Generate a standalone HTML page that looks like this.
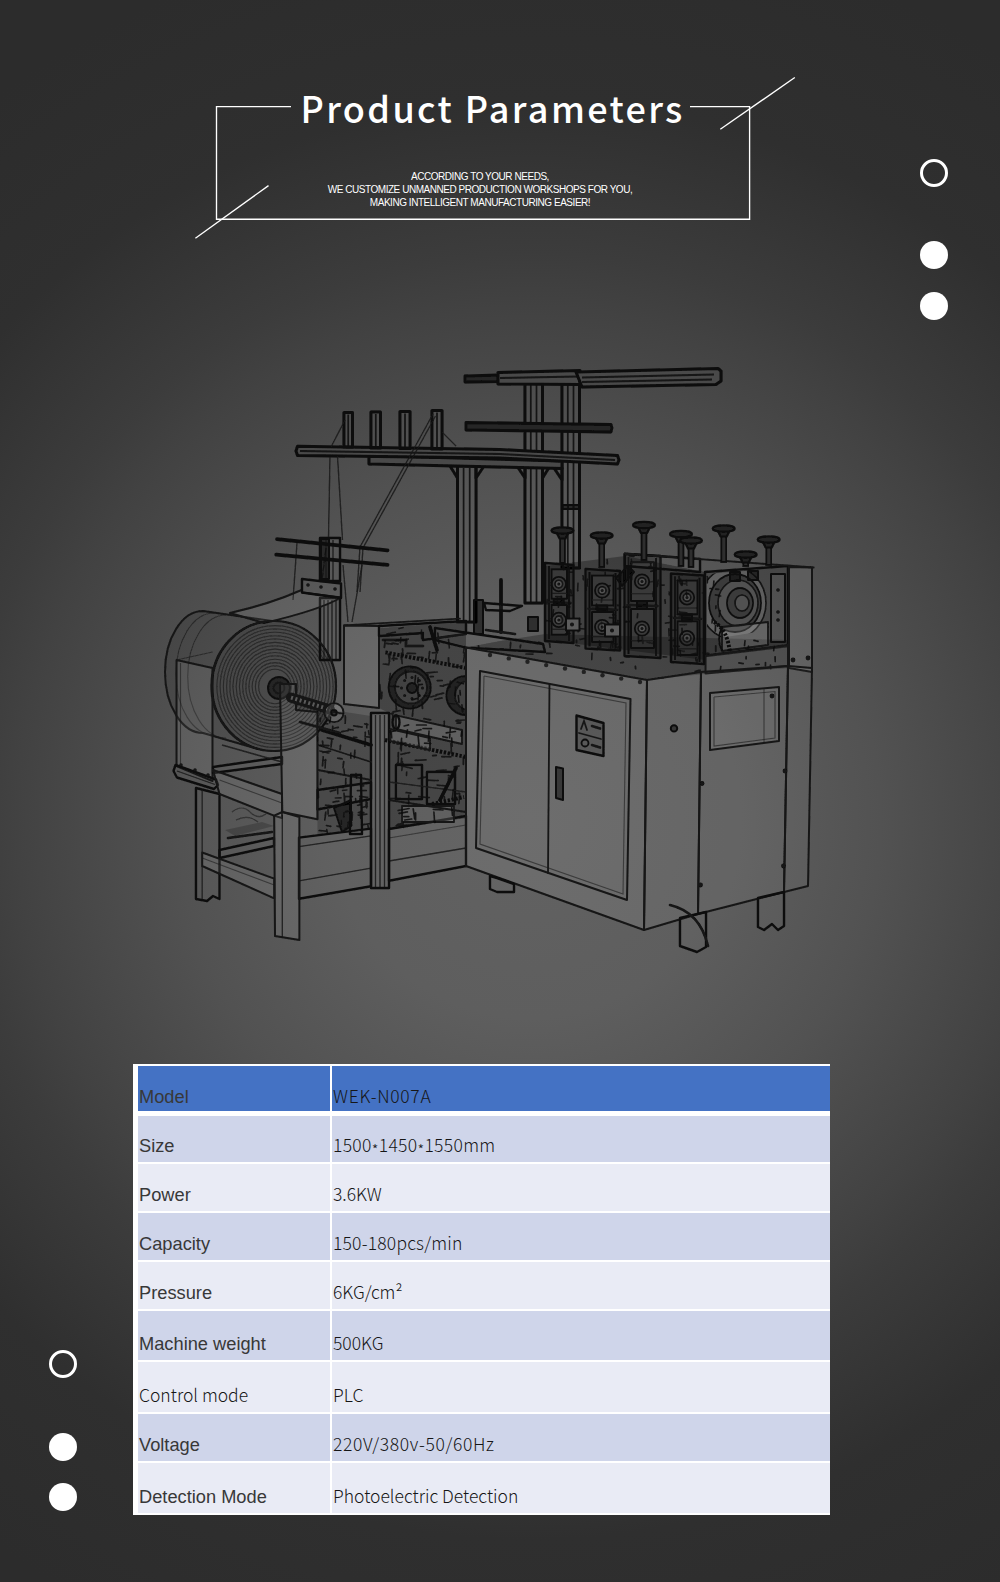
<!DOCTYPE html>
<html lang="en">
<head>
<meta charset="utf-8">
<title>Product Parameters</title>
<style>
html,body{margin:0;padding:0;}
body{width:1000px;height:1582px;overflow:hidden;background:#2c2c2c;font-family:"Liberation Sans",sans-serif;}
#page{position:relative;width:1000px;height:1582px;overflow:hidden;
  background:radial-gradient(circle 900px at 530px 820px,#626262 0%,#5e5e5e 22%,#525252 39%,#424242 57%,#3c3c3c 63%,#2f2f2f 80%,#2c2c2c 100%);}
.abs{position:absolute;}
/* header frame */
.frame-line{position:absolute;background:#fff;}
#title{position:absolute;left:300.5px;top:79px;width:400px;height:56px;line-height:56px;color:#fff;
  font-family:"Noto Sans CJK SC","Liberation Sans",sans-serif;font-size:36px;letter-spacing:2.35px;white-space:nowrap;font-weight:500;}
#sub{position:absolute;left:230px;top:169.6px;width:500px;text-align:center;color:#fff;font-size:10px;letter-spacing:-0.46px;line-height:13.4px;
  font-family:"Liberation Sans",sans-serif;white-space:nowrap;}
.dot{position:absolute;width:28px;height:28px;border-radius:50%;background:#fff;box-sizing:border-box;}
.ring{background:transparent;border:3px solid #fff;}
/* table */
#tbl{position:absolute;left:133px;top:1064px;width:697px;height:451px;background:#fff;}
.c{position:absolute;}
.c1{left:5px;width:192px;}
.c2{left:199px;width:498px;}
.hd{background:#4472c4;}
.ra{background:#cfd5ea;}
.rb{background:#e9ebf5;}
.t{position:absolute;white-space:nowrap;line-height:20px;height:20px;}
.l{left:139px;font-family:"Liberation Sans",sans-serif;font-size:18.25px;color:#383838;}
.r{left:333px;font-family:"Noto Sans CJK SC","Liberation Sans",sans-serif;font-weight:300;font-size:17.5px;color:#161616;}
.ast{position:relative;top:3.5px;font-size:15px;}
</style>
</head>
<body>
<div id="page">

<!-- header frame -->
<svg class="abs" style="left:0;top:0" width="1000" height="300" viewBox="0 0 1000 300">
  <path d="M291 106.6 H216.5 V219.2 H749.6 V106.6 H690" fill="none" stroke="#fff" stroke-width="1.35"/>
  <line x1="794.8" y1="77.5" x2="720.3" y2="129.3" stroke="#fff" stroke-width="1.35"/>
  <line x1="268.5" y1="185.6" x2="195.4" y2="238.2" stroke="#fff" stroke-width="1.35"/>
</svg>
<div id="title">Product Parameters</div>
<div id="sub">ACCORDING TO YOUR NEEDS,<br>WE CUSTOMIZE UNMANNED PRODUCTION WORKSHOPS FOR YOU,<br>MAKING INTELLIGENT MANUFACTURING EASIER!</div>

<!-- dots -->
<div class="dot ring" style="left:920px;top:159px;"></div>
<div class="dot" style="left:920px;top:241px;"></div>
<div class="dot" style="left:920px;top:292px;"></div>
<div class="dot ring" style="left:49px;top:1350px;"></div>
<div class="dot" style="left:49px;top:1433px;"></div>
<div class="dot" style="left:49px;top:1483px;"></div>

<!-- MACHINE -->
<svg id="machine" class="abs" style="left:0;top:340px" width="1000" height="660" viewBox="0 340 1000 660">
<style>
#machine .p{fill:rgba(255,255,255,.075);stroke:#151515;stroke-width:2;stroke-linejoin:round}
#machine .pc{fill:url(#cabg);stroke:#151515;stroke-width:2;stroke-linejoin:round}
#machine .pc2{fill:rgba(255,255,255,.02);stroke:#151515;stroke-width:2;stroke-linejoin:round}
#machine .pan{fill:rgba(0,0,0,.18);stroke:#101010;stroke-width:2.4;stroke-linejoin:round}
#machine .pl{fill:rgba(255,255,255,.14);stroke:#141414;stroke-width:1.8;stroke-linejoin:round}
#machine .pl2{fill:rgba(255,255,255,.12);stroke:#121212;stroke-width:1.6;stroke-linejoin:round}
#machine .door{fill:rgba(255,255,255,.005);stroke:#151515;stroke-width:2;stroke-linejoin:round}
#machine .win{fill:rgba(255,255,255,.05);stroke:#151515;stroke-width:2;stroke-linejoin:round}
#machine .m{fill:rgba(255,255,255,.02);stroke:#101010;stroke-width:2.4;stroke-linejoin:round}
#machine .rm{fill:rgba(255,255,255,.02);stroke:#0c0c0c;stroke-width:3;stroke-linejoin:round}
#machine .rmO{fill:#484848;stroke:#0c0c0c;stroke-width:3;stroke-linejoin:round}
#machine .rdO{fill:#262626;stroke:#0c0c0c;stroke-width:2.8;stroke-linejoin:round}
#machine .rl{fill:none;stroke:#101010;stroke-width:1.8;opacity:.9}
#machine .mO{fill:#4c4c4c;stroke:#101010;stroke-width:2.5;stroke-linejoin:round}
#machine .dO{fill:#2c2c2c;stroke:#101010;stroke-width:2;stroke-linejoin:round}
#machine .d{fill:rgba(0,0,0,.5);stroke:#101010;stroke-width:2;stroke-linejoin:round}
#machine .dk{fill:rgba(0,0,0,.27);stroke:none}
#machine .dk3{fill:rgba(0,0,0,.3);stroke:none}
#machine .dk2{fill:rgba(0,0,0,.2);stroke:none}
#machine .blk{fill:rgba(255,255,255,.05);stroke:#0f0f0f;stroke-width:2;stroke-linejoin:round}
#machine .pl3{fill:#5c5c5c;stroke:#0f0f0f;stroke-width:2;stroke-linejoin:round}
#machine .stm{fill:#2e2e2e;stroke:#0c0c0c;stroke-width:1.8}
#machine .mod2{fill:rgba(0,0,0,.14);stroke:#0f0f0f;stroke-width:2.4;stroke-linejoin:round}
#machine .dfill{fill:#3a3a3a;stroke:#101010;stroke-width:1.8}
#machine .mod{fill:rgba(0,0,0,.22);stroke:#0f0f0f;stroke-width:2.4;stroke-linejoin:round}
#machine .lnm{fill:none;stroke:#0f0f0f;stroke-width:1.8}
#machine .cl{fill:none;stroke:#0e0e0e;stroke-width:1.7;stroke-linecap:round;opacity:.85}
#machine .body{fill:rgba(0,0,0,.08);stroke:#151515;stroke-width:2}
#machine .face{fill:rgba(0,0,0,.15);stroke:#131313;stroke-width:2.2}
#machine .ring{fill:none;stroke:#141414;stroke-width:1.1;opacity:.6}
#machine .ln{fill:none;stroke:#151515;stroke-width:1.8;stroke-linecap:round}
#machine .l2{fill:none;stroke:#161616;stroke-width:1.3;opacity:.85}
#machine .l3{fill:none;stroke:#1a1a1a;stroke-width:1.1;opacity:.6}
#machine .w{fill:none;stroke:#161616;stroke-width:1.3;opacity:.85}
#machine .rod{fill:none;stroke:#111;stroke-width:3.8;stroke-linecap:round}
#machine .rod2{fill:none;stroke:#131313;stroke-width:2.6;stroke-linecap:round}
#machine .chain{fill:none;stroke:#0f0f0f;stroke-width:4;stroke-dasharray:2.4 1.6}
#machine .shaft{fill:none;stroke:#141414;stroke-width:10;stroke-linecap:round}
#machine .shaftd{fill:none;stroke:#5a5a5a;stroke-width:4;stroke-dasharray:2 2.5}
#machine .stem{fill:none;stroke:#101010;stroke-width:4.4}
#machine .cap{fill:#242424;stroke:#0b0b0b;stroke-width:2.2;stroke-linejoin:round}
#machine .dot{fill:#121212;stroke:none}
</style>
<defs><linearGradient id="cabg" gradientUnits="userSpaceOnUse" x1="0" y1="650" x2="0" y2="930"><stop offset="0" stop-color="#fff" stop-opacity=".13"/><stop offset="1" stop-color="#fff" stop-opacity=".02"/></linearGradient><filter id="soft" x="-2%" y="-2%" width="104%" height="104%"><feGaussianBlur stdDeviation="0.4"/></filter></defs>
<g filter="url(#soft)">
<g id="rack">
<rect class="rm" x="457.5" y="466.0" width="18.5" height="156.0"/>
<polyline class="rl" points="463.6,468.0 463.6,622.0"/>
<polyline class="rl" points="469.7,468.0 469.7,622.0"/>
<rect class="rm" x="525.0" y="383.0" width="17.5" height="220.0"/>
<polyline class="rl" points="530.8,385.0 530.8,603.0"/>
<polyline class="rl" points="536.5,385.0 536.5,603.0"/>
<rect class="rm" x="562.0" y="383.0" width="17.5" height="185.0"/>
<polyline class="rl" points="567.8,385.0 567.8,568.0"/>
<polyline class="rl" points="573.5,385.0 573.5,568.0"/>
<rect class="d" x="562.0" y="505.0" width="17.5" height="4.0"/>
<polygon class="rm" points="450.0,466.0 457.5,466.0 457.5,478.0"/>
<polygon class="rm" points="476.0,466.0 484.0,466.0 476.0,478.0"/>
<polygon class="rm" points="517.0,466.0 525.0,466.0 525.0,478.0"/>
<polygon class="rm" points="542.5,466.0 550.0,466.0 542.5,478.0"/>
<polygon class="rm" points="554.0,468.0 562.0,468.0 562.0,480.0"/>
<polygon class="rdO" points="465.0,376.0 500.0,375.0 500.0,381.5 465.0,382.0"/>
<polygon class="rmO" points="498.0,372.5 580.0,370.5 580.0,384.5 498.0,384.0"/>
<polyline class="rl" points="500.0,378.0 578.0,376.5"/>
<polygon class="rmO" points="576.0,372.0 718.0,368.5 721.0,371.0 721.0,381.0 716.0,384.5 582.0,387.0"/>
<polyline class="rl" points="582.0,377.5 714.0,374.5"/>
<polyline class="rl" points="582.0,382.0 712.0,379.5"/>
<polygon class="rdO" points="466.0,422.5 611.0,424.5 612.0,428.0 611.0,432.0 466.0,430.0"/>
<polygon class="rmO" points="369.0,455.5 562.0,461.0 562.0,468.5 369.0,464.0"/>
<polygon class="rmO" points="297.5,446.3 500.0,449.5 617.5,455.5 619.0,460.0 617.5,464.0 500.0,458.0 297.5,455.5 296.0,451.0"/>
<polyline class="rl" points="300.0,451.0 500.0,454.0 615.0,460.0"/>
<rect class="rm" x="344.0" y="412.5" width="8.5" height="34.5"/>
<polyline class="rl" points="348.2,414.5 348.2,447.0"/>
<rect class="rm" x="371.0" y="412.0" width="9.5" height="36.0"/>
<polyline class="rl" points="375.8,414.0 375.8,448.0"/>
<rect class="rm" x="400.0" y="411.5" width="10.0" height="37.0"/>
<polyline class="rl" points="405.0,413.5 405.0,448.5"/>
<rect class="rm" x="432.0" y="410.5" width="10.0" height="38.5"/>
<polyline class="rl" points="437.0,412.5 437.0,449.0"/>
<polyline class="w" points="433.0,414.0 360.0,547.0 357.0,592.0"/>
<polyline class="w" points="435.5,416.0 363.0,548.0 360.0,592.0"/>
<polyline class="w" points="330.0,456.0 328.5,538.0"/>
<polyline class="w" points="337.5,456.0 342.5,540.0"/>
<polyline class="w" points="345.0,420.0 331.0,447.0"/>
<polyline class="w" points="442.0,432.0 456.0,446.0"/>
<polyline class="w" points="326.0,548.0 322.0,580.0"/>
<polyline class="w" points="297.0,543.0 293.0,600.0"/>
<polyline class="w" points="343.0,565.0 348.0,622.0"/>
<polyline class="w" points="362.0,565.0 352.0,622.0"/>
</g>
<g id="arms">
<rect class="m" x="320.0" y="538.0" width="20.0" height="43.0"/>
<polyline class="l2" points="326.0,540.0 326.0,580.0"/>
<polyline class="l2" points="333.0,540.0 333.0,580.0"/>
<rect class="m" x="320.0" y="598.0" width="20.0" height="62.0"/>
<polyline class="l2" points="324.0,600.0 324.0,659.0"/>
<polyline class="l2" points="328.0,600.0 328.0,659.0"/>
<polyline class="l2" points="332.0,600.0 332.0,659.0"/>
<polyline class="l2" points="336.0,600.0 336.0,659.0"/>
<rect class="d" x="321.0" y="539.0" width="8.0" height="40.0"/>
<polyline class="rod" points="277.0,539.2 387.5,550.4"/>
<polyline class="rod" points="276.2,554.7 387.5,564.9"/>
</g>
<g id="drum">
<path class="body" d="M 203 611 L 272 621 A 62 65 0 0 0 258 749 L 203 733 A 38 61 0 0 1 203 611 Z"/>
<path class="l3" d="M 214 613 A 38 61 0 0 0 214 735"/>
<path class="l3" d="M 226 615 A 38 61 0 0 0 226 738"/>
<polygon class="p" points="176.5,660.0 212.5,668.0 212.5,781.0 176.5,766.0"/>
<polyline class="l3" points="180.5,663.0 180.5,766.0"/>
<polyline class="l3" points="176.5,660.0 212.5,652.0"/>
<path class="p" d="M 230 613 Q 270 604 301.6 590 L 302 592.5 L 341 597.5 Q 320 610 264 623 Z"/>
<ellipse class="face" cx="274.0" cy="686.0" rx="62.0" ry="65.0"/>
<ellipse class="ring" cx="275.0" cy="686.5" rx="58.0" ry="60.9"/>
<ellipse class="ring" cx="275.0" cy="686.5" rx="54.8" ry="57.5"/>
<ellipse class="ring" cx="275.0" cy="686.5" rx="51.6" ry="54.2"/>
<ellipse class="ring" cx="275.0" cy="686.5" rx="48.4" ry="50.8"/>
<ellipse class="ring" cx="275.0" cy="686.5" rx="45.2" ry="47.5"/>
<ellipse class="ring" cx="275.0" cy="686.5" rx="42.0" ry="44.1"/>
<ellipse class="ring" cx="275.0" cy="686.5" rx="38.8" ry="40.7"/>
<ellipse class="ring" cx="275.0" cy="686.5" rx="35.6" ry="37.4"/>
<ellipse class="ring" cx="275.0" cy="686.5" rx="32.4" ry="34.0"/>
<ellipse class="ring" cx="275.0" cy="686.5" rx="29.2" ry="30.7"/>
<ellipse class="ring" cx="275.0" cy="686.5" rx="26.0" ry="27.3"/>
<ellipse class="ring" cx="275.0" cy="686.5" rx="22.8" ry="23.9"/>
<ellipse class="ring" cx="275.0" cy="686.5" rx="19.6" ry="20.6"/>
<ellipse class="ring" cx="275.0" cy="686.5" rx="16.4" ry="17.2"/>
<ellipse class="d" cx="279.0" cy="688.0" rx="11.0" ry="11.0"/>
<ellipse class="ln" cx="279.0" cy="688.0" rx="5.5" ry="5.5"/>
<polygon class="m" points="302.0,579.0 341.0,583.5 341.0,598.0 302.0,592.5"/>
<ellipse class="dot" cx="308.0" cy="585.0" rx="1.8" ry="1.8"/>
<ellipse class="dot" cx="321.0" cy="587.0" rx="1.8" ry="1.8"/>
<ellipse class="dot" cx="335.0" cy="589.0" rx="1.8" ry="1.8"/>
<polygon class="m" points="175.5,765.0 216.0,779.5 218.0,785.0 214.0,789.0 177.0,777.5 173.5,771.0"/>
<polyline class="l2" points="177.0,771.0 215.0,784.5"/>
<ellipse class="dot" cx="181.0" cy="765.0" rx="1.8" ry="1.8"/>
<ellipse class="dot" cx="195.0" cy="770.0" rx="1.8" ry="1.8"/>
<ellipse class="dot" cx="208.0" cy="775.0" rx="1.8" ry="1.8"/>
</g>
<g id="frame">
<polygon class="m" points="213.0,767.0 282.0,757.0 282.0,764.0 213.0,773.0"/>
<polyline class="l2" points="222.0,745.0 282.0,762.0"/>
<polygon class="m" points="219.5,850.0 274.0,838.0 274.0,846.0 219.5,858.0"/>
<polygon class="dk2" points="225.0,830.0 262.0,822.0 274.0,826.0 235.0,836.0"/>
<path class="l3" d="M232 812q10 -8 18 0t16 2M236 820q12 -6 22 2"/>
<polyline class="rod2" points="228.0,838.0 272.0,832.0"/>
<polygon class="m" points="196.0,788.0 219.5,794.0 219.5,899.0 213.0,896.0 207.0,901.0 196.0,899.0"/>
<polyline class="l2" points="202.2,790.0 202.2,899.0"/>
<polygon class="p" points="213.0,770.0 282.0,794.0 282.0,818.0 274.0,815.6 219.5,794.0"/>
<polyline class="l3" points="219.5,780.0 282.0,803.0"/>
<polygon class="p" points="202.2,852.5 274.2,878.6 274.2,898.4 202.2,866.0"/>
<polyline class="l3" points="202.2,858.0 274.2,885.0"/>
<polygon class="m" points="299.0,837.6 371.0,828.6 371.0,886.2 299.0,898.8"/>
<polyline class="l2" points="299.0,846.6 371.0,835.8"/>
<polyline class="l2" points="299.0,880.8 371.0,868.2"/>
<polygon class="m" points="389.0,829.0 466.0,816.0 466.0,866.0 389.0,880.8"/>
<polyline class="l2" points="389.0,861.0 466.0,848.0"/>
<polyline class="l3" points="389.0,838.0 466.0,825.0"/>
<polygon class="m" points="317.4,790.0 371.0,782.5 371.0,799.0 317.4,809.5"/>
<polygon class="p" points="280.0,684.0 296.0,684.0 296.0,710.0 317.4,712.0 317.4,819.2 282.3,812.0"/>
<polygon class="p" points="274.2,815.6 282.3,812.0 299.4,817.0 299.4,940.0 275.0,936.0"/>
<polyline class="l2" points="282.3,815.0 282.3,938.0"/>
<rect class="m" x="371.0" y="713.0" width="18.0" height="175.0"/>
<polyline class="l2" points="375.5,715.0 375.5,887.0"/>
<polyline class="l2" points="380.0,715.0 380.0,887.0"/>
<polyline class="l2" points="384.5,715.0 384.5,887.0"/>
</g>
<g id="mid">
<polygon class="dk" points="379.0,628.0 466.0,622.0 466.0,818.0 389.0,830.0 389.0,713.0 379.0,708.0"/>
<polygon class="dk2" points="300.0,705.0 371.0,716.0 371.0,829.0 317.4,836.0 317.4,712.0"/>
<polygon class="p" points="344.0,625.4 379.0,626.0 379.0,708.0 344.0,704.0"/>
<polyline class="ln" points="344.0,625.4 460.0,618.7"/>
<polygon class="m" points="379.0,626.0 466.0,621.0 466.0,634.0 423.0,640.0 423.0,633.0 379.0,636.0"/>
<polyline class="rod2" points="383.0,640.0 406.0,640.0 406.0,646.0 423.0,646.0"/>
<polyline class="chain" points="385.4,652.4 466.0,668.0"/>
<polyline class="chain" points="385.0,740.0 466.0,757.0"/>
<ellipse class="d" cx="409.7" cy="687.5" rx="21.0" ry="21.0"/>
<ellipse class="pl" cx="411.0" cy="687.5" rx="16.0" ry="16.0"/>
<ellipse class="d" cx="412.0" cy="688.0" rx="5.0" ry="5.0"/>
<ellipse class="dot" cx="422.5" cy="688.0" rx="1.5" ry="1.5"/>
<ellipse class="dot" cx="419.4" cy="695.4" rx="1.5" ry="1.5"/>
<ellipse class="dot" cx="412.0" cy="698.5" rx="1.5" ry="1.5"/>
<ellipse class="dot" cx="404.6" cy="695.4" rx="1.5" ry="1.5"/>
<ellipse class="dot" cx="401.5" cy="688.0" rx="1.5" ry="1.5"/>
<ellipse class="dot" cx="404.6" cy="680.6" rx="1.5" ry="1.5"/>
<ellipse class="dot" cx="412.0" cy="677.5" rx="1.5" ry="1.5"/>
<ellipse class="dot" cx="419.4" cy="680.6" rx="1.5" ry="1.5"/>
<path class="d" d="M 466 676 A 19.5 19.5 0 0 0 466 715 Z"/>
<path class="pl" d="M 466 681 A 15 15 0 0 0 466 710 Z"/>
<polygon class="pl" points="396.0,715.4 462.0,730.0 462.0,744.0 396.0,729.0"/>
<ellipse class="m" cx="396.0" cy="722.2" rx="3.5" ry="7.0"/>
<polygon class="pl" points="390.0,729.0 430.0,738.0 430.0,750.0 390.0,741.0"/>
<rect class="m" x="396.0" y="765.0" width="26.0" height="34.0"/>
<rect class="m" x="427.0" y="772.0" width="28.0" height="32.0"/>
<rect class="pl" x="402.0" y="806.0" width="52.0" height="16.0"/>
<polyline class="ln" points="389.0,800.0 466.0,812.0"/>
<polyline class="l2" points="389.0,782.0 466.0,792.0"/>
<polyline class="rod" points="440.0,800.0 456.0,768.0"/>
<polyline class="chain" points="432.0,804.0 464.0,797.0"/>
<polyline class="rod" points="430.0,627.0 437.0,650.0"/>
<path class="cl" d="M407.2 653.4l8.2 0.1M410.8 634.1l7.1 -0.2M385.1 640.9l-0.7 6.4M398.4 752.5l-0.3 10.6M389.2 686.2l9.5 0.4M434.6 699.5l7.4 -1.6M396.9 763.5l6.4 0.3M418.4 684.4l-0.7 9.4M429.0 731.2l-0.6 10.0M464.3 646.6l-0.7 6.3M421.5 630.2l0.2 8.3M455.2 687.3l0.2 8.6M418.7 796.7l10.6 0.9M450.5 681.2l-0.9 6.1M419.2 657.0l3.9 0.5M390.3 673.5l-0.8 6.1M418.1 736.3l1.1 10.1M403.2 708.4l0.8 5.9M392.1 658.7l4.9 -0.0M430.3 676.7l3.0 -0.2M437.8 633.2l1.1 10.2M448.4 703.6l6.2 0.4M384.4 636.0l4.7 -0.4M392.2 643.1l5.9 1.1M432.4 652.9l5.0 -0.3M389.7 798.6l10.9 -0.1M386.5 643.3l5.7 0.9M461.7 731.9l-0.6 4.2M454.1 766.8l5.1 -0.8M446.2 732.8l9.2 -1.3M453.2 789.7l-0.8 9.5M424.0 696.0l3.2 -0.4M401.5 766.0l10.7 2.3M410.7 667.9l4.8 -0.7M433.3 809.3l9.7 0.7M448.6 639.6l0.7 8.3M444.3 721.4l-0.2 4.4M413.4 705.5l-1.0 10.6M390.1 653.4l-1.1 10.2M436.2 694.9l7.4 -1.8M463.5 757.1l-0.1 7.2M454.8 793.8l4.7 -0.5M399.9 744.0l5.1 -0.9M458.2 695.6l0.8 6.7M415.6 812.9l0.0 7.0M448.5 657.8l0.1 6.8M407.4 729.8l-0.9 7.4M427.7 673.7l0.0 5.2M427.9 780.1l10.3 0.6M423.0 728.5l8.5 0.1M401.6 738.4l-1.1 10.5M389.6 714.0l3.6 -0.8M437.2 785.1l10.2 1.1M436.4 651.7l-0.8 10.1M461.9 704.8l0.7 6.9M393.0 711.8l7.1 -1.1M406.7 772.2l-0.1 3.2M380.6 691.0l-1.0 8.0M402.5 648.9l0.6 6.4M401.5 653.1l0.6 10.4M386.8 634.0l8.5 -1.8M418.5 692.5l-0.5 7.4M390.2 731.6l4.9 -0.8M383.4 664.0l5.5 0.7M404.2 726.0l4.4 -1.1M442.8 736.6l4.5 1.0M416.6 725.0l9.7 0.0M408.8 795.1l-0.2 8.7M409.2 633.3l4.0 0.5M401.2 656.0l0.4 3.7M437.3 680.6l4.9 -0.1M392.7 714.7l0.7 5.1M426.6 672.8l10.7 -0.8M402.0 640.7l6.2 -1.5M405.5 670.4l0.6 7.7M436.2 770.9l10.0 -0.9M464.7 653.1l-1.2 8.8M451.7 807.5l0.8 8.0M391.1 730.9l0.6 7.0M450.9 743.5l0.6 10.1M399.0 628.5l4.1 -0.8M451.7 738.2l0.4 8.0M448.4 777.6l0.3 7.0M400.9 637.5l-0.5 5.1M422.0 701.6l0.5 6.8M432.7 755.7l3.6 -0.4M443.7 685.3l7.5 -1.7M402.4 761.8l-0.5 8.5M423.9 718.6l6.7 1.3M396.3 825.5l10.5 -0.2M418.1 677.9l-0.4 4.7M429.6 651.5l-0.8 7.2M450.4 727.8l-0.8 10.1M457.1 723.1l3.2 -0.0M418.2 684.8l4.1 -0.4M444.3 796.5l0.3 4.0M457.4 682.3l6.0 1.5M430.3 697.0l6.4 -1.5M403.8 816.6l5.0 0.0M395.5 699.7l1.0 10.6M433.9 812.0l0.7 10.5M418.2 778.6l8.2 -1.8M401.6 758.4l-0.2 5.4M393.6 655.6l-0.0 4.7M398.1 810.5l11.0 -2.0M395.7 640.9l5.7 -0.7M401.5 740.5l-0.3 10.1M415.0 731.0l6.0 -1.3M403.1 823.3l0.2 4.0M454.1 666.9l5.2 -0.3M456.9 720.4l7.7 -0.4M459.6 793.7l-0.7 9.8M388.5 654.1l1.0 7.2M441.8 756.6l9.1 0.2M399.2 813.3l8.2 -1.5M400.9 754.3l8.6 -1.8M424.6 743.2l6.1 0.3M379.9 684.7l0.3 6.7M455.9 720.9l4.9 1.1M440.3 685.9l3.2 0.3M415.5 675.5l-0.7 8.3M382.0 692.3l-0.6 6.4M448.3 775.7l7.0 1.7M406.1 792.6l4.8 0.6M404.7 820.0l7.0 -1.0M415.3 760.4l10.6 -0.6M397.5 824.6l4.1 -0.9M413.2 808.8l1.5 10.1M460.0 690.5l0.3 4.5M411.9 699.8l5.7 -1.4"/>
<polyline class="shaft" points="291.0,697.6 330.0,709.5"/>
<polyline class="shaftd" points="291.0,697.6 330.0,709.5"/>
<ellipse class="pl" cx="334.0" cy="712.7" rx="9.5" ry="9.5"/>
<ellipse class="d" cx="334.0" cy="712.7" rx="2.8" ry="2.8"/>
<polyline class="rod" points="322.0,730.0 371.0,745.0"/>
<polyline class="rod2" points="300.0,722.0 340.0,733.0"/>
<polyline class="ln" points="318.0,745.0 371.0,762.0"/>
<polyline class="ln" points="318.0,770.0 371.0,780.0"/>
<polygon class="m" points="351.0,775.0 361.0,775.0 362.0,834.0 350.0,834.0"/>
<polygon class="d" points="334.0,808.0 351.0,800.0 351.0,826.0 342.0,832.0"/>
<path class="cl" d="M319.9 751.0l8.7 2.0M358.3 812.7l5.6 -0.1M326.5 825.5l4.2 0.8M357.6 805.4l3.2 -0.7M365.3 738.7l-0.4 7.5M319.3 830.5l6.7 0.7M322.5 741.1l0.4 3.0M345.0 828.6l3.1 -0.0M327.4 737.9l5.6 1.2M352.4 812.8l-0.4 7.6M322.7 752.4l7.7 -1.2M353.5 737.4l3.4 0.1M335.4 798.0l5.7 -0.2M344.0 793.3l0.4 7.5M320.9 779.3l-0.5 5.2M317.6 737.1l0.1 3.9M323.2 756.9l-0.7 9.0M357.4 790.6l8.9 -0.1M358.2 815.1l8.5 -0.9M331.9 739.1l-0.9 7.7M342.3 786.2l4.3 -0.8M342.6 790.4l4.2 -0.4M348.2 729.3l4.9 0.7M338.9 713.3l3.6 0.1M345.4 716.9l-0.1 4.0M320.1 745.3l8.7 0.3M325.4 759.6l-0.3 8.2M332.7 726.3l0.1 3.1M337.0 826.2l3.7 0.6M368.6 730.9l0.5 3.8M334.3 712.0l8.6 1.7M344.0 813.0l-0.3 4.0M328.7 815.9l8.0 -1.1M328.4 772.8l5.3 -0.7M351.5 822.5l0.3 3.2M339.1 787.1l4.8 0.2M330.2 791.3l5.7 -1.4M343.9 769.1l0.4 4.4M332.5 728.5l5.8 -1.1M330.6 717.0l-0.8 5.7M345.2 715.8l0.0 7.4M326.8 829.6l0.6 3.8M352.0 811.8l-0.0 4.2M367.9 825.0l0.5 4.0M353.7 725.8l8.4 1.3M365.3 732.3l-0.2 4.6M348.3 822.3l-0.5 4.0M337.7 788.4l0.1 5.2M341.2 820.6l0.1 3.6M328.0 809.5l0.1 4.6M325.6 805.2l5.7 0.7M318.0 788.7l0.4 8.9M343.7 761.6l-0.7 6.1M341.8 731.7l6.7 -1.2M366.5 736.9l3.9 0.3M361.9 807.5l5.4 -1.3M345.8 778.7l-0.1 5.1M366.5 801.1l-0.6 4.5M337.7 758.2l4.4 0.6M366.8 723.6l0.0 4.2M345.6 811.6l4.0 -0.4M355.6 798.7l0.2 3.0M333.0 802.2l5.7 -1.1M360.0 798.2l-0.1 4.6M356.0 773.5l0.6 4.6M367.1 802.7l-0.3 5.0M344.8 795.8l-0.1 7.0M359.6 796.4l8.1 0.9M340.5 745.3l-0.5 4.3M364.7 723.9l3.2 0.7M324.5 723.6l3.2 0.3M345.0 796.3l7.4 0.3M325.8 812.1l-1.0 7.9M361.6 824.8l8.7 -1.3M360.2 811.4l0.3 6.8M320.4 718.1l-0.3 3.6M322.7 760.5l3.1 -0.3M350.8 753.2l0.0 4.9M360.4 786.0l3.2 -0.1M354.9 750.4l-0.6 7.2"/>
</g>
<g id="top">
<polygon class="m" points="435.0,628.0 543.0,644.0 545.0,652.0 466.0,647.6 435.0,640.0"/>
<polyline class="rod" points="501.0,580.0 501.0,632.0"/>
<polygon class="m" points="484.0,603.0 522.0,606.0 510.0,611.0 486.0,610.0"/>
<rect class="d" x="474.0" y="600.0" width="9.0" height="34.0"/>
<polyline class="rod2" points="486.0,630.0 515.0,634.0"/>
<rect class="d" x="528.0" y="617.0" width="10.0" height="14.0"/>
<polygon class="dk" points="545.0,634.0 790.0,640.0 790.0,668.0 705.0,674.0 647.0,680.0 466.0,647.6 500.0,641.0"/>
<polygon class="dk3" points="545.0,566.0 625.0,556.0 705.0,572.0 705.0,660.0 545.0,640.0"/>
<path class="cl" d="M676.2 573.7l2.0 0.3M623.5 607.1l6.8 -0.0M600.5 642.5l-0.2 3.6M579.4 628.7l5.0 0.3M601.9 597.7l-0.5 4.4M578.0 583.4l-0.3 7.4M686.4 580.3l0.4 4.8M665.5 623.2l4.1 -0.7M679.9 624.9l6.5 -0.2M668.7 616.2l2.8 0.5M583.1 575.9l0.4 3.8M569.7 572.2l3.5 0.0M570.7 590.1l0.2 3.1M561.3 596.0l0.6 7.9M614.6 576.4l5.8 -0.9M607.1 559.5l0.3 4.4M625.1 621.8l4.8 0.2M609.8 633.1l7.4 0.3M664.9 599.8l0.4 3.4M668.8 628.8l0.3 7.1M617.6 588.6l5.8 -0.2M670.2 630.2l5.8 -0.2M617.8 620.6l0.6 4.5M574.3 624.1l6.7 -0.0M631.9 572.7l0.0 6.7M561.2 615.8l0.0 5.2M647.3 642.2l5.1 1.1M578.6 627.2l-0.5 4.4M702.5 593.0l2.3 -0.1M547.1 599.5l-0.2 4.5M587.4 579.3l0.1 6.4M580.0 639.4l4.4 -0.8M669.3 640.2l5.8 0.2M601.5 622.4l-0.1 6.9M592.1 613.0l-0.1 2.8M681.1 583.8l4.3 -0.2M660.5 585.2l3.5 -0.0M613.6 622.3l6.0 1.3M677.5 650.2l6.7 1.1M650.0 582.0l2.6 -0.3M669.2 592.0l0.3 2.9M642.3 637.3l0.5 6.0M679.2 576.5l0.4 6.2M615.2 647.8l5.3 -0.7M567.3 607.3l2.4 -0.4"/>
<polygon class="mod" points="545.0,563.0 573.5,565.0 573.5,643.0 545.0,641.0"/>
<polyline class="lnm" points="549.0,566.0 549.0,639.0"/>
<polyline class="lnm" points="569.0,567.0 569.0,641.0"/>
<rect class="blk" x="551.5" y="569.2" width="15.5" height="29.6"/>
<ellipse class="lnm" cx="558.8" cy="584.1" rx="7.2" ry="7.2"/>
<ellipse class="pl2" cx="558.8" cy="584.1" rx="3.8" ry="3.8"/>
<ellipse class="dot" cx="558.8" cy="584.1" rx="1.5" ry="1.5"/>
<polyline class="l2" points="551.5,593.4 567.0,593.4"/>
<rect class="blk" x="551.5" y="605.1" width="15.5" height="29.6"/>
<ellipse class="lnm" cx="558.8" cy="619.9" rx="7.2" ry="7.2"/>
<ellipse class="pl2" cx="558.8" cy="619.9" rx="3.8" ry="3.8"/>
<ellipse class="dot" cx="558.8" cy="619.9" rx="1.5" ry="1.5"/>
<polyline class="l2" points="551.5,629.3 567.0,629.3"/>
<polyline class="rod2" points="548.0,602.0 570.5,603.0"/>
<rect class="d" x="553.8" y="598.9" width="10.0" height="6.2"/>
<path class="cl" d="M559.0 602.9l-0.6 4.2M569.0 600.4l0.4 4.3M555.7 596.5l5.8 0.4M563.1 565.3l0.6 4.4M546.0 620.5l4.5 0.8M555.4 601.0l-0.4 4.1M557.4 596.8l-0.3 4.2M568.6 595.3l4.0 0.0M553.5 609.9l-0.6 4.5M565.6 633.8l4.2 -0.4"/>
<polygon class="mod" points="585.5,569.0 620.0,571.0 620.0,650.5 585.5,648.5"/>
<polyline class="lnm" points="589.5,572.0 589.5,646.5"/>
<polyline class="lnm" points="615.5,573.0 615.5,648.5"/>
<rect class="blk" x="592.0" y="575.4" width="21.5" height="30.2"/>
<ellipse class="lnm" cx="602.2" cy="590.5" rx="7.2" ry="7.2"/>
<ellipse class="pl2" cx="602.2" cy="590.5" rx="3.8" ry="3.8"/>
<ellipse class="dot" cx="602.2" cy="590.5" rx="1.5" ry="1.5"/>
<polyline class="l2" points="592.0,600.0 613.5,600.0"/>
<rect class="blk" x="592.0" y="611.9" width="21.5" height="30.2"/>
<ellipse class="lnm" cx="602.2" cy="627.0" rx="7.2" ry="7.2"/>
<ellipse class="pl2" cx="602.2" cy="627.0" rx="3.8" ry="3.8"/>
<ellipse class="dot" cx="602.2" cy="627.0" rx="1.5" ry="1.5"/>
<polyline class="l2" points="592.0,636.6 613.5,636.6"/>
<polyline class="rod2" points="588.5,608.8 617.0,609.8"/>
<rect class="d" x="597.2" y="605.6" width="10.0" height="6.4"/>
<path class="cl" d="M585.7 584.5l0.3 5.7M612.7 643.2l0.2 4.4M609.5 617.6l4.7 0.4M601.3 631.2l2.4 -0.6M612.2 643.5l4.6 0.7M612.6 614.8l3.0 -0.1M596.5 604.1l-0.6 4.6M605.1 572.2l0.1 2.5M617.2 605.4l2.1 0.1M607.7 586.3l2.6 -0.6"/>
<polygon class="mod" points="624.5,554.0 660.5,556.0 660.5,658.0 624.5,656.0"/>
<polyline class="lnm" points="628.5,557.0 628.5,654.0"/>
<polyline class="lnm" points="656.0,558.0 656.0,656.0"/>
<rect class="blk" x="631.0" y="562.2" width="23.0" height="38.8"/>
<ellipse class="lnm" cx="642.0" cy="581.5" rx="7.2" ry="7.2"/>
<ellipse class="pl2" cx="642.0" cy="581.5" rx="3.8" ry="3.8"/>
<ellipse class="dot" cx="642.0" cy="581.5" rx="1.5" ry="1.5"/>
<polyline class="l2" points="631.0,593.8 654.0,593.8"/>
<rect class="blk" x="631.0" y="609.1" width="23.0" height="38.8"/>
<ellipse class="lnm" cx="642.0" cy="628.5" rx="7.2" ry="7.2"/>
<ellipse class="pl2" cx="642.0" cy="628.5" rx="3.8" ry="3.8"/>
<ellipse class="dot" cx="642.0" cy="628.5" rx="1.5" ry="1.5"/>
<polyline class="l2" points="631.0,640.7 654.0,640.7"/>
<polyline class="rod2" points="627.5,605.0 657.5,606.0"/>
<rect class="d" x="637.0" y="600.9" width="10.0" height="8.2"/>
<path class="cl" d="M649.1 566.7l5.9 1.1M629.1 555.8l4.9 0.6M631.2 559.2l0.5 5.1M650.8 562.8l-0.1 4.5M658.1 580.4l-0.9 5.9M625.0 621.7l5.3 -0.5M650.8 571.3l5.4 -1.2M637.7 613.8l-0.4 3.8M653.2 591.8l-0.1 4.6M638.4 635.8l0.1 5.8"/>
<polygon class="mod" points="671.0,573.5 704.0,575.5 704.0,664.0 671.0,662.0"/>
<polyline class="lnm" points="675.0,576.5 675.0,660.0"/>
<polyline class="lnm" points="699.5,577.5 699.5,662.0"/>
<rect class="blk" x="677.5" y="580.6" width="20.0" height="33.6"/>
<ellipse class="lnm" cx="687.0" cy="597.4" rx="7.2" ry="7.2"/>
<ellipse class="pl2" cx="687.0" cy="597.4" rx="3.8" ry="3.8"/>
<ellipse class="dot" cx="687.0" cy="597.4" rx="1.5" ry="1.5"/>
<polyline class="l2" points="677.5,608.0 697.5,608.0"/>
<rect class="blk" x="677.5" y="621.3" width="20.0" height="33.6"/>
<ellipse class="lnm" cx="687.0" cy="638.1" rx="7.2" ry="7.2"/>
<ellipse class="pl2" cx="687.0" cy="638.1" rx="3.8" ry="3.8"/>
<ellipse class="dot" cx="687.0" cy="638.1" rx="1.5" ry="1.5"/>
<polyline class="l2" points="677.5,648.7 697.5,648.7"/>
<polyline class="rod2" points="674.0,617.8 701.0,618.8"/>
<rect class="d" x="682.0" y="614.2" width="10.0" height="7.1"/>
<path class="cl" d="M680.6 579.0l0.6 5.9M682.0 628.3l0.2 5.9M681.2 612.3l5.6 0.5M690.9 654.6l5.2 -1.3M679.7 611.7l0.5 4.3M672.4 648.9l0.1 5.2M680.0 650.5l0.6 5.2M682.4 581.2l-0.4 4.2M695.8 657.8l0.2 2.9M686.4 592.2l0.3 3.0"/>
<rect class="pl3" x="566.0" y="618.5" width="13.5" height="12.0"/>
<ellipse class="dot" cx="572.0" cy="624.5" rx="2.0" ry="2.0"/>
<rect class="pl3" x="605.0" y="624.5" width="15.0" height="12.0"/>
<ellipse class="dot" cx="612.0" cy="630.5" rx="2.0" ry="2.0"/>
<polygon class="d" points="616.0,578.0 628.0,566.0 634.0,572.0 622.0,586.0"/>
<polygon class="mod2" points="705.0,572.0 788.0,566.0 788.0,646.0 705.0,656.0"/>
<clipPath id="bigclip"><polygon points="707,574 770,569 770,630 707,640"/></clipPath>
<g clip-path="url(#bigclip)">
<ellipse class="pl2" cx="733.0" cy="603.0" rx="33.0" ry="36.0"/>
<ellipse class="dfill" cx="735.0" cy="603.0" rx="26.0" ry="29.0"/>
<ellipse class="pl2" cx="738.0" cy="603.0" rx="20.0" ry="23.0"/>
<ellipse class="dfill" cx="740.0" cy="603.0" rx="13.0" ry="15.0"/>
<ellipse class="pl2" cx="742.0" cy="603.0" rx="7.0" ry="8.0"/>
</g>
<polygon class="pl" points="722.0,627.0 768.0,622.0 768.0,645.0 722.0,651.0"/>
<path class="lnm" d="M 722 627 Q 716 640 722 651"/>
<path class="chain" d="M 714 622 Q 728 630 730 654"/>
<rect class="blk" x="771.0" y="574.0" width="14.0" height="68.0"/>
<ellipse class="dot" cx="778.0" cy="590.0" rx="1.8" ry="1.8"/>
<ellipse class="dot" cx="778.0" cy="612.0" rx="1.8" ry="1.8"/>
<ellipse class="dot" cx="778.0" cy="620.0" rx="1.8" ry="1.8"/>
<rect class="d" x="730.0" y="572.0" width="10.0" height="9.0"/>
<rect class="d" x="748.0" y="571.0" width="10.0" height="9.0"/>
<path class="cl" d="M713.9 581.0l-0.4 5.2M715.7 645.8l-0.0 5.5M715.8 589.1l2.8 0.3M712.4 619.2l-0.4 3.6M707.3 576.7l-0.0 6.0M715.5 594.9l5.1 1.1M710.0 588.5l2.3 0.1M720.1 610.7l-0.8 5.8M716.0 605.8l-0.2 2.5M715.5 625.3l-0.2 5.8"/>
<polygon class="p" points="705.5,655.5 788.0,645.0 788.0,666.0 705.5,673.5"/>
<polygon class="p" points="789.0,567.0 812.0,567.5 812.0,672.0 789.0,668.0"/>
<polygon class="m" points="625.0,553.7 700.0,559.0 700.0,572.0 625.0,566.0"/>
<polyline class="ln" points="625.0,553.7 813.7,567.5"/>
<ellipse class="dot" cx="490.0" cy="655.0" rx="2.2" ry="2.2"/>
<ellipse class="dot" cx="508.8" cy="658.4" rx="2.2" ry="2.2"/>
<ellipse class="dot" cx="527.5" cy="661.8" rx="2.2" ry="2.2"/>
<ellipse class="dot" cx="546.2" cy="665.1" rx="2.2" ry="2.2"/>
<ellipse class="dot" cx="565.0" cy="668.5" rx="2.2" ry="2.2"/>
<ellipse class="dot" cx="583.8" cy="671.9" rx="2.2" ry="2.2"/>
<ellipse class="dot" cx="602.5" cy="675.2" rx="2.2" ry="2.2"/>
<ellipse class="dot" cx="621.2" cy="678.6" rx="2.2" ry="2.2"/>
<ellipse class="dot" cx="640.0" cy="682.0" rx="2.2" ry="2.2"/>
<path class="cl" d="M611.3 641.3l-0.6 6.8M478.5 645.8l0.5 3.8M720.8 666.6l-0.7 5.2M770.4 665.1l0.3 3.5M500.2 648.9l3.3 -0.0M520.6 645.0l-0.4 2.7M698.4 643.0l-0.2 2.2M753.9 640.4l4.2 0.9M738.9 662.9l4.3 0.7M620.7 662.9l2.7 -0.6M697.2 659.5l-0.2 2.7M599.4 641.2l-0.2 3.4M756.0 664.7l3.1 -0.3M549.5 643.3l0.6 3.8M576.5 640.4l0.0 2.0M526.2 654.0l6.6 0.2M510.7 642.3l-0.5 5.9M663.2 656.8l3.4 0.2M695.3 671.3l4.9 -1.1M703.4 652.8l5.6 0.9M746.1 656.7l-0.0 2.1M748.5 646.2l-0.1 2.9M519.0 651.1l5.0 0.0M610.4 657.7l0.2 2.6M746.4 648.8l5.6 0.7M775.1 656.8l0.1 4.6M538.5 642.4l2.5 0.4M692.5 643.0l0.0 2.1M635.4 666.3l0.2 2.5M625.9 657.0l3.4 -0.2M745.0 640.8l-0.5 4.9M592.0 653.3l-0.2 6.2M575.7 645.1l3.7 0.9M546.8 653.4l5.2 0.1M673.9 646.2l5.4 0.1M765.5 662.6l-0.1 3.3M774.1 647.2l-0.4 3.5M658.5 678.0l4.6 -0.1M639.0 640.8l2.6 -0.3M597.7 647.3l3.2 0.1"/>
</g>
<g id="cab">
<polygon class="pc" points="466.0,647.6 647.0,680.0 644.0,930.0 466.0,866.0" style="fill:rgba(255,255,255,.07)"/>
<polygon class="pc" points="647.0,680.0 701.0,672.0 698.0,914.0 644.0,930.0" style="fill:rgba(255,255,255,.055)"/>
<polygon class="pc" points="701.0,672.0 788.0,666.0 784.0,892.0 698.0,914.0" style="fill:rgba(255,255,255,.045)"/>
<polygon class="pc" points="788.0,666.0 812.0,668.0 808.0,886.0 784.0,892.0" style="fill:rgba(255,255,255,.04)"/>
<polygon class="door" points="480.0,671.0 630.5,699.0 627.0,900.0 476.0,848.0"/>
<polyline class="l3" points="484.0,676.0 626.0,703.0 623.0,894.0 480.0,844.0 484.0,676.0"/>
<polyline class="ln" points="549.5,684.0 548.0,873.0"/>
<polygon class="pan" points="576.5,715.5 603.5,723.0 603.5,756.0 576.5,750.0"/>
<polyline class="ln" points="579.0,733.0 601.0,739.0"/>
<ellipse class="lnm" cx="585.0" cy="743.0" rx="3.5" ry="3.5"/>
<polyline class="ln" points="581.0,729.0 584.0,721.0 587.0,730.0"/>
<polyline class="rod2" points="592.0,726.0 600.0,728.5"/>
<polyline class="rod2" points="592.0,745.0 600.0,747.5"/>
<polygon class="d" points="556.0,767.0 563.0,768.5 563.0,800.0 556.0,798.0"/>
<polygon class="win" points="710.0,693.0 779.0,687.0 779.0,741.0 710.0,750.0"/>
<polyline class="l3" points="764.0,689.0 764.0,743.0"/>
<polyline class="l3" points="714.0,697.0 775.0,691.5 775.0,738.0 714.0,746.0 714.0,697.0"/>
<ellipse class="d" cx="674.0" cy="728.4" rx="3.2" ry="3.2"/>
<ellipse class="dot" cx="702.0" cy="783.5" rx="2.4" ry="2.4"/>
<ellipse class="dot" cx="785.0" cy="771.0" rx="2.4" ry="2.4"/>
<ellipse class="dot" cx="700.5" cy="885.0" rx="2.4" ry="2.4"/>
<ellipse class="dot" cx="783.5" cy="866.0" rx="2.4" ry="2.4"/>
<ellipse class="dot" cx="772.0" cy="696.0" rx="2.4" ry="2.4"/>
<ellipse class="dot" cx="793.0" cy="660.0" rx="2.4" ry="2.4"/>
<ellipse class="dot" cx="808.0" cy="658.0" rx="2.4" ry="2.4"/>
<polygon class="m" points="490.0,876.0 497.0,878.0 514.0,884.0 514.0,892.0 497.0,892.0 490.0,889.0"/>
<polygon class="m" points="680.0,918.0 706.0,912.0 706.0,947.0 697.0,952.0 680.0,946.0"/>
<polygon class="m" points="758.0,898.0 784.0,892.0 784.0,926.0 778.0,930.0 772.0,924.0 764.0,930.0 758.0,927.0"/>
<path class="rod2" d="M 670 905 Q 700 912 708 946"/>
</g>
<g id="handles">
<rect class="stm" x="560.1" y="535.5" width="4.8" height="27.5"/>
<polygon class="cap" points="556.5,532.5 568.5,532.5 565.5,538.5 559.5,538.5"/>
<ellipse class="cap" cx="562.5" cy="530.5" rx="11.0" ry="3.2"/>
<rect class="stm" x="599.3" y="540.5" width="4.8" height="26.5"/>
<polygon class="cap" points="595.7,537.5 607.7,537.5 604.7,543.5 598.7,543.5"/>
<ellipse class="cap" cx="601.7" cy="535.5" rx="11.0" ry="3.2"/>
<rect class="stm" x="641.6" y="530.0" width="4.8" height="30.0"/>
<polygon class="cap" points="638.0,527.0 650.0,527.0 647.0,533.0 641.0,533.0"/>
<ellipse class="cap" cx="644.0" cy="525.0" rx="11.0" ry="3.2"/>
<rect class="stm" x="678.6" y="539.0" width="4.8" height="27.0"/>
<polygon class="cap" points="675.0,536.0 687.0,536.0 684.0,542.0 678.0,542.0"/>
<ellipse class="cap" cx="681.0" cy="534.0" rx="11.0" ry="3.2"/>
<rect class="stm" x="688.6" y="545.5" width="4.8" height="21.5"/>
<polygon class="cap" points="685.0,542.5 697.0,542.5 694.0,548.5 688.0,548.5"/>
<ellipse class="cap" cx="691.0" cy="540.5" rx="11.0" ry="3.2"/>
<rect class="stm" x="721.3" y="533.5" width="4.8" height="28.5"/>
<polygon class="cap" points="717.7,530.5 729.7,530.5 726.7,536.5 720.7,536.5"/>
<ellipse class="cap" cx="723.7" cy="528.5" rx="11.0" ry="3.2"/>
<rect class="stm" x="743.3" y="559.5" width="4.8" height="6.5"/>
<polygon class="cap" points="739.7,556.5 751.7,556.5 748.7,562.5 742.7,562.5"/>
<ellipse class="cap" cx="745.7" cy="554.5" rx="11.0" ry="3.2"/>
<rect class="stm" x="766.3" y="544.5" width="4.8" height="20.5"/>
<polygon class="cap" points="762.7,541.5 774.7,541.5 771.7,547.5 765.7,547.5"/>
<ellipse class="cap" cx="768.7" cy="539.5" rx="11.0" ry="3.2"/>
</g>
</g>
</svg>

<!-- table -->
<div id="tbl">
  <div class="c c1 hd" style="top:2px;height:45px"></div><div class="c c2 hd" style="top:2px;height:45px"></div>
  <div class="c c1 ra" style="top:52px;height:46px"></div><div class="c c2 ra" style="top:52px;height:46px"></div>
  <div class="c c1 rb" style="top:100px;height:47px"></div><div class="c c2 rb" style="top:100px;height:47px"></div>
  <div class="c c1 ra" style="top:149px;height:47px"></div><div class="c c2 ra" style="top:149px;height:47px"></div>
  <div class="c c1 rb" style="top:198px;height:47px"></div><div class="c c2 rb" style="top:198px;height:47px"></div>
  <div class="c c1 ra" style="top:247px;height:49px"></div><div class="c c2 ra" style="top:247px;height:49px"></div>
  <div class="c c1 rb" style="top:298px;height:50px"></div><div class="c c2 rb" style="top:298px;height:50px"></div>
  <div class="c c1 ra" style="top:350px;height:47px"></div><div class="c c2 ra" style="top:350px;height:47px"></div>
  <div class="c c1 rb" style="top:399px;height:50px"></div><div class="c c2 rb" style="top:399px;height:50px"></div>
</div>
<div class="t l" style="top:1087px">Model</div><div class="t r" style="top:1086px"><span style="letter-spacing:0.7px">WEK-N007A</span></div>
<div class="t l" style="top:1136px">Size</div><div class="t r" style="top:1135px"><span style="letter-spacing:0.32px">1500<span class="ast">*</span>1450<span class="ast">*</span>1550mm</span></div>
<div class="t l" style="top:1185px">Power</div><div class="t r" style="top:1184px">3.6KW</div>
<div class="t l" style="top:1234px">Capacity</div><div class="t r" style="top:1233px"><span style="letter-spacing:0.2px">150-180pcs/min</span></div>
<div class="t l" style="top:1283px">Pressure</div><div class="t r" style="top:1282px">6KG/cm²</div>
<div class="t l" style="top:1334px">Machine weight</div><div class="t r" style="top:1333px">500KG</div>
<div class="t r" style="top:1385px;left:139px">Control mode</div><div class="t r" style="top:1385px">PLC</div>
<div class="t l" style="top:1435px">Voltage</div><div class="t r" style="top:1434px"><span style="letter-spacing:0.65px">220V/380v-50/60Hz</span></div>
<div class="t l" style="top:1487px">Detection Mode</div><div class="t r" style="top:1486px">Photoelectric Detection</div>

</div>
</body>
</html>
